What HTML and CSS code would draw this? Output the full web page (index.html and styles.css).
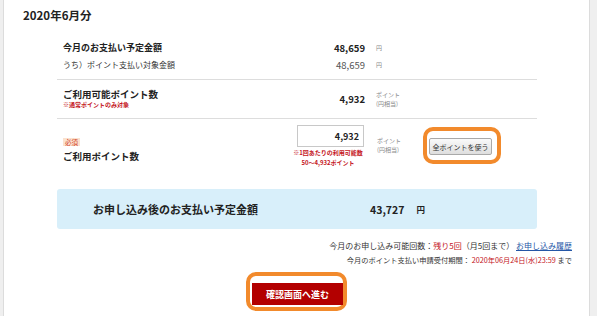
FILE: index.html
```html
<!DOCTYPE html>
<html>
	<head>
		<meta charset="utf-8">
		<title>ポイント支払い</title>
		<link rel="stylesheet" href="styles.css">
	</head>
	<body>
		<div class="page">
			<h2 class="month">2020年6月分</h2>
			<div class="summary">
				<div class="row first">
					<div class="line">
						<span class="label strong">今月のお支払い予定金額</span>
						<span class="value strong">48,659</span>
						<span class="unit">円</span>
					</div>
					<div class="line">
						<span class="label">うち）ポイント支払い対象金額</span>
						<span class="value">48,659</span>
						<span class="unit">円</span>
					</div>
				</div>
				<div class="row">
					<div class="label">
						<div class="label-main">ご利用可能ポイント数</div>
						<div class="note">※通常ポイントのみ対象</div>
					</div>
					<div class="value strong">4,932</div>
					<div class="unit">ポイント<br>(円相当)</div>
				</div>
				<div class="row use">
					<div class="label">
						<span class="badge">必須</span>
						<div class="label-main">ご利用ポイント数</div>
					</div>
					<div class="value">
						<input class="point-input" type="text" value="4,932">
						<div class="note center">※1回あたりの利用可能数<br>50～4,932ポイント</div>
					</div>
					<div class="unit">ポイント<br>(円相当)</div>
					<div class="mark">
						<button class="btn-all">全ポイントを使う</button>
					</div>
				</div>
				<div class="total">
					<span class="total-label">お申し込み後のお支払い予定金額</span>
					<span class="total-value">43,727</span>
					<span class="total-unit">円</span>
				</div>
			</div>
			<div class="info">
				<p class="count">今月のお申し込み可能回数：<span class="red">残り5回</span>（月5回まで） <a href="#">お申し込み履歴</a></p>
				<p>今月のポイント支払い申請受付期間： <span class="red">2020年06月24日(水)23:59</span> まで</p>
			</div>
			<div class="submit">
				<div class="mark mark-submit">
					<button class="btn-next">確認画面へ進む</button>
				</div>
			</div>
		</div>
	</body>
</html>
```

FILE: styles.css
```css
body{
	margin:0;
	background:#efefef;
	font-family:"Noto Sans CJK JP","Liberation Sans",sans-serif;
	color:#333;
}
.page{
	margin-left:3px;
	width:587px;
	min-height:330px;
	box-sizing:border-box;
	background:#fff;
	border-left:1px solid #dcdcdc;
	border-right:1px solid #dcdcdc;
}
.month{
	margin:0;
	padding:7px 19px 0;
	font-size:11.5px;
	line-height:16px;
	font-weight:bold;
	color:#222;
}
.summary{
	margin:16px 52px 0 53px;
}
.row{
	display:flex;
	align-items:center;
	padding:8px 0 9px 6px;
	border-bottom:1px solid #dddddd;
}
.row.first{
	display:block;
	padding:0 0 6px 6px;
}
.line{
	display:flex;
	align-items:center;
	height:17px;
}
.label{
	width:232px;
	font-size:8px;
}
.label-main{
	font-size:9.5px;
	line-height:12px;
	font-weight:bold;
	color:#222;
}
.strong{
	font-weight:bold;
	font-size:9px;
	color:#222;
}
.value{
	width:70px;
	text-align:right;
	font-size:9.5px;
	color:#555;
}
.value.strong{
	color:#222;
}
.unit{
	margin-left:11px;
	width:47px;
	font-size:6px;
	line-height:9px;
	color:#888;
}
.note{
	font-size:6px;
	line-height:9px;
	font-weight:bold;
	color:#c4151c;
}
.note.center{
	text-align:center;
	line-height:10px;
	margin-top:1px;
	margin-left:-4px;
}
.row.use{
	align-items:flex-start;
	padding:6px 0 0 6px;
	border-bottom:none;
}
.row.use .label{
	margin-top:11px;
}
.row.use .label-main{
	margin-top:3px;
}
.badge{
	display:inline-block;
	padding:0 2px;
	height:8px;
	line-height:8px;
	font-size:6.5px;
	color:#d2452a;
	background:#fbe2cf;
}
.point-input{
	display:block;
	width:67px;
	height:22px;
	margin-left:2px;
	box-sizing:border-box;
	border:1px solid #c8c8c8;
	padding:0 4px;
	text-align:right;
	font-family:inherit;
	font-size:9px;
	font-weight:bold;
	color:#222;
}
.row.use .unit{
	margin-top:11px;
	margin-left:12px;
	width:46px;
}
.mark{
	display:inline-block;
	border:4px solid #f28a2c;
	border-radius:10px;
	padding:7px 5px 5px 2px;
}
.row.use .mark{
	margin-top:2px;
}
.btn-all{
	display:block;
	width:63px;
	height:17px;
	padding:0;
	border:1px solid #a9a9a9;
	border-radius:2px;
	background:linear-gradient(#fafafa,#dedede);
	font-family:inherit;
	font-size:7px;
	color:#333;
}
.total{
	display:flex;
	align-items:center;
	margin-top:21px;
	height:40px;
	padding-left:36px;
	border-radius:3px;
	background:#d8effa;
	color:#222;
	font-weight:bold;
}
.total-label{
	width:277px;
	font-size:11px;
}
.total-value{
	font-size:10.5px;
}
.total-unit{
	margin-left:12px;
	font-size:8.5px;
}
.info{
	margin-top:9px;
	padding-right:17px;
	text-align:right;
	font-size:7.25px;
	color:#333;
}
.info p{
	margin:0;
	line-height:15px;
}
.info .count{
	font-size:8px;
}
.info a{
	color:#2456a6;
}
.red{
	color:#c4151c;
}
.submit{
	margin-top:4px;
	text-align:center;
}
.mark-submit{
	padding:7px 0 2px 2px;
}
.btn-next{
	display:block;
	width:91px;
	height:22px;
	padding:0;
	border:none;
	background:#b30000;
	font-family:inherit;
	font-size:9px;
	font-weight:bold;
	color:#fff;
}
```
